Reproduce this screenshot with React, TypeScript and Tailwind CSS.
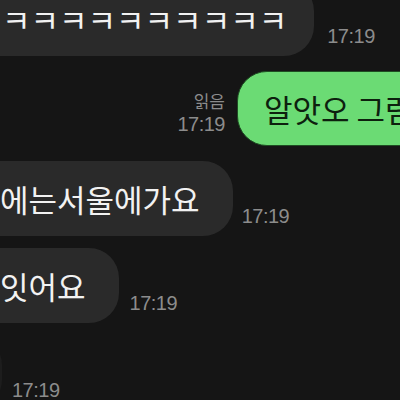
const kr = "font-['Noto_Sans_CJK_KR','Noto_Sans',sans-serif]";
const time =
  "font-['Liberation_Sans','Noto_Sans_CJK_KR',sans-serif] text-[20px] leading-[20px] tracking-[-0.5px] text-[#8c8c8c]";

function Received({ text, ml, pr, timeGap = 12 }: { text: string; ml: string; pr: string; timeGap?: number }) {
  return (
    <div className="flex items-end">
      <div
        className={`flex h-[75px] shrink-0 items-center rounded-[30px] bg-[#2a2a2a] pl-[40px] ${ml} ${pr} ${kr} whitespace-nowrap text-[31px] leading-none text-[#f2f2f2]`}
      >
        {text}
      </div>
      <span className={`mb-[10px] ${time}`} style={{ marginLeft: timeGap }}>
        17:19
      </span>
    </div>
  );
}

export default function App() {
  return (
    <div className="flex h-[400px] w-[400px] flex-col overflow-hidden bg-[#151515]">
      <div className="-mt-[19px]">
        <Received text="ㅋㅋㅋㅋㅋㅋㅋㅋㅋㅋ" ml="-ml-[38px]" pr="pr-[27px]" timeGap={13} />
      </div>

      <div className="mt-[15px] flex items-end">
        <div className="ml-auto mb-[12px] flex w-[60px] flex-col items-end">
          <span className={`${kr} text-[17px] leading-[20px] text-[#8c8c8c]`}>읽음</span>
          <span className={`mt-[3px] ${time}`}>17:19</span>
        </div>
        <div
          className={`-mr-[60px] ml-[12px] flex h-[75px] w-[223px] shrink-0 items-center rounded-[30px] border border-[#1e4d22] bg-[#6bdb74] pl-[26px] ${kr} whitespace-nowrap text-[31px] leading-none text-[#0d200e]`}
        >
          알앗오 그럼
        </div>
      </div>

      <div className="mt-[15px]">
        <Received text="에는서울에가요" ml="-ml-[40px]" pr="pr-[33px]" timeGap={9} />
      </div>

      <div className="mt-[12px]">
        <Received text="잇어요" ml="-ml-[40px]" pr="pr-[33px]" timeGap={11} />
      </div>

      <div className="mt-[12px] flex items-end">
        <div className="-ml-[100px] h-[75px] w-[102px] shrink-0 rounded-[30px] bg-[#1d1d1d]" />
        <span className={`mb-[10px] ml-[10px] ${time}`}>17:19</span>
      </div>
    </div>
  );
}
